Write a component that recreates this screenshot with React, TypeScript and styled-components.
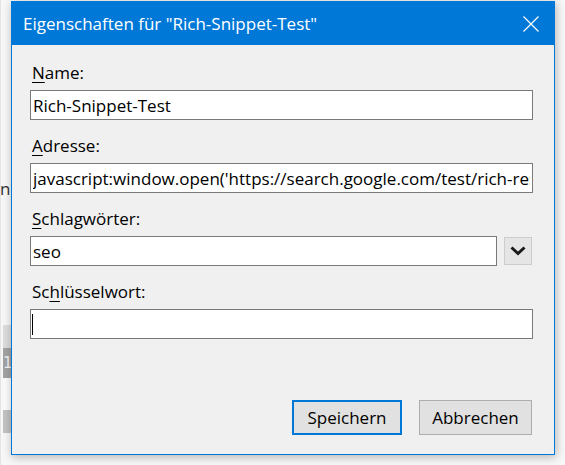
import styled, { createGlobalStyle } from 'styled-components';
import * as React from 'react';

//-----------------------------------------------------------------------------//

const Global = createGlobalStyle`
  html, body { margin: 0; padding: 0; }
  body {
    width: 565px;
    height: 465px;
    overflow: hidden;
    background: #f6f6f6;
    font-family: "Open Sans", "Noto Sans", sans-serif;
  }
`;

const Desktop = styled.div`
  position: relative;
  width: 565px;
  height: 465px;
  background: #f7f7f7;
`;

// what is left visible of the application behind the dialog
const Backdrop = styled.div`
  display: flex;
  flex-direction: column;
  width: 11px;
  height: 100%;
  padding-left: 2px;
  border-left: 1px solid #e4e4e4;
  box-sizing: border-box;
  overflow: hidden;
`;

const BackText = styled.div`
  margin-top: 178px;
  margin-left: -3px;
  font-size: 17px;
  line-height: 22px;
  color: #333;
`;

const Strip = styled.div<{ $h: number; $bg: string }>`
  height: ${p => p.$h}px;
  background: ${p => p.$bg};
  color: #f4f4f4;
  font-family: "DejaVu Sans Mono", monospace;
  font-size: 15px;
  line-height: ${p => p.$h}px;
`;

const Window = styled.div`
  position: absolute;
  left: 11px;
  top: 1px;
  width: 544px;
  height: 454px;
  box-sizing: border-box;
  border: 1px solid #0078d7;
  background: #f0f0f0;
  display: flex;
  flex-direction: column;
  box-shadow: 1px 2px 9px rgba(0, 0, 0, 0.28);
`;

const TitleBar = styled.div`
  height: 43px;
  flex-shrink: 0;
  display: flex;
  align-items: center;
  background: #0078d7;
  color: #fff;
  padding-left: 11px;
  font-size: 17px;
`;

const Title = styled.div`
  flex: 1;
  line-height: 23px;
`;

const CloseBox = styled.div`
  width: 47px;
  height: 43px;
  display: flex;
  align-items: center;
  justify-content: center;
`;

const Body = styled.div`
  flex: 1;
  display: flex;
  flex-direction: column;
  padding: 16px 21px 19px 18px;
`;

const Field = styled.div`
  display: flex;
  flex-direction: column;
  margin-bottom: 14px;
`;

const Label = styled.label`
  font-size: 17px;
  line-height: 23px;
  color: #000;
  padding-left: 2px;
  margin-bottom: 6px;

  u {
    text-decoration-thickness: 1px;
    text-underline-offset: 3px;
  }
`;

const Row = styled.div`
  display: flex;
  align-items: center;
  gap: 7px;
`;

const Box = styled.div`
  position: relative;
  flex: 1;
  display: flex;
  flex-direction: column;
`;

const Input = styled.input`
  display: block;
  width: 100%;
  height: 30px;
  flex-shrink: 0;
  box-sizing: border-box;
  margin: 0;
  padding: 0 2px;
  border: 1px solid #7a7a7a;
  border-radius: 0;
  background: #fff;
  color: #000;
  font-family: "Open Sans", "Noto Sans", sans-serif;
  font-size: 17px;
  outline: none;
`;

const Caret = styled.span`
  position: absolute;
  left: 2px;
  top: 5px;
  width: 1px;
  height: 21px;
  background: #000;
`;

const DropButton = styled.div`
  width: 28px;
  height: 28px;
  flex-shrink: 0;
  box-sizing: border-box;
  margin-right: 1px;
  border: 1px solid #cdcdcd;
  background: #e5e5e5;
  display: flex;
  align-items: center;
  justify-content: center;
`;

const Buttons = styled.div`
  margin-top: auto;
  display: flex;
  justify-content: flex-end;
  gap: 17px;
  padding-right: 1px;
`;

const Button = styled.div<{ $default?: boolean; $w: number }>`
  width: ${p => p.$w}px;
  height: 35px;
  box-sizing: border-box;
  display: flex;
  align-items: center;
  justify-content: center;
  background: #e1e1e1;
  border: ${p => (p.$default ? '2px solid #0078d7' : '1px solid #adadad')};
  font-size: 17px;
  color: #000;
`;

//-----------------------------------------------------------------------------//

const ADDRESS =
  "javascript:window.open('https://search.google.com/test/rich-results?url='+encodeURIComponent(location.href))";

export default function App() {
  return (
    <Desktop>
      <Global />
      <Backdrop>
        <BackText>n</BackText>
        <div style={{ height: 125 }} />
        <Strip $h={23} $bg="#dcdcdc" />
        <Strip $h={30} $bg="#a3a3a3">1</Strip>
        <Strip $h={32} $bg="#fbfbfb" />
        <Strip $h={23} $bg="#c2c2c2" />
      </Backdrop>

      <Window>
        <TitleBar>
          <Title>Eigenschaften für "Rich-Snippet-Test"</Title>
          <CloseBox>
            <svg width="16" height="16" viewBox="0 0 16 16">
              <path d="M0.5 0.5 L15.5 15.5 M15.5 0.5 L0.5 15.5" stroke="#fff" strokeWidth="1.2" fill="none" />
            </svg>
          </CloseBox>
        </TitleBar>

        <Body>
          <Field>
            <Label><u>N</u>ame:</Label>
            <Input readOnly value="Rich-Snippet-Test" />
          </Field>
          <Field>
            <Label><u>A</u>dresse:</Label>
            <Input readOnly value={ADDRESS} />
          </Field>
          <Field>
            <Label><u>S</u>chlagwörter:</Label>
            <Row>
              <Box>
                <Input readOnly value="seo" />
              </Box>
              <DropButton>
                <svg width="16" height="10" viewBox="0 0 16 10">
                  <path d="M1.5 1.5 L8 7.5 L14.5 1.5" stroke="#1a1a1a" strokeWidth="3" fill="none" />
                </svg>
              </DropButton>
            </Row>
          </Field>
          <Field>
            <Label>Sc<u>h</u>lüsselwort:</Label>
            <Box>
              <Input readOnly value="" />
              <Caret />
            </Box>
          </Field>

          <Buttons>
            <Button $default $w={110}>Speichern</Button>
            <Button $w={113}>Abbrechen</Button>
          </Buttons>
        </Body>
      </Window>
    </Desktop>
  );
}
